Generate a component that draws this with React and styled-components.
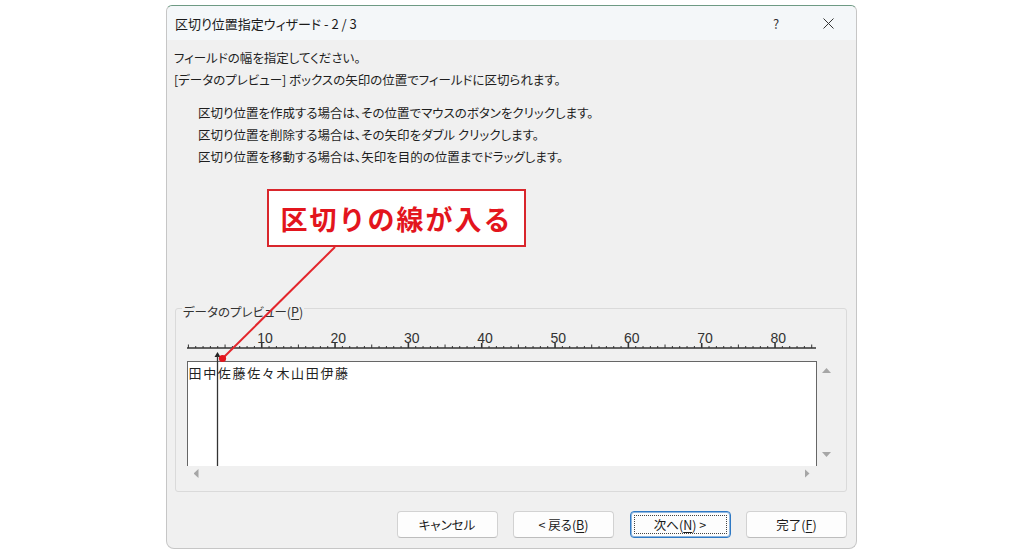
import React from 'react'
import styled, { createGlobalStyle } from 'styled-components'

const GlobalStyle = createGlobalStyle`
  html, body {
    margin: 0;
    padding: 0;
    background: #ffffff;
  }
  body {
    font-family: "Noto Sans CJK JP", "Noto Sans", sans-serif;
    color: #1e1e1e;
  }
`

const Page = styled.div`
  width: 1024px;
  height: 555px;
  box-sizing: border-box;
  padding: 5px 0 0 166px;
  display: flex;
  align-items: flex-start;
`

const Dialog = styled.div`
  position: relative;
  width: 691px;
  height: 544px;
  box-sizing: border-box;
  display: flex;
  flex-direction: column;
  background: #f0f0f0;
  border: 1px solid #c6c6c6;
  border-top-color: #6e9a84;
  border-radius: 6px 6px 8px 8px;
  font-size: 12.5px;
  font-feature-settings: "palt";
`

const TitleBar = styled.div`
  height: 34px;
  display: flex;
  align-items: center;
  padding-left: 8px;
  background: #f4f7f9;
  border-radius: 6px 6px 0 0;
`

const Title = styled.span`
  flex: 1;
  font-size: 13px;
  color: #1b1b1b;
`

const CaptionButton = styled.div`
  width: ${p => p.$w}px;
  height: 34px;
  display: flex;
  align-items: center;
  justify-content: center;
  font-size: 13px;
  color: #333;
`

const Body = styled.div`
  flex: 1;
  display: flex;
  flex-direction: column;
  padding: 7px 9px 0 7px;
`

const Lines = styled.div`
  line-height: 22px;
  padding-left: ${p => p.$indent || 0}px;
  margin-top: ${p => p.$gap || 0}px;
`

const Callout = styled.div`
  align-self: flex-start;
  margin: 21px 0 0 93px;
  width: 259px;
  height: 58px;
  box-sizing: border-box;
  display: flex;
  align-items: center;
  justify-content: center;
  background: #ffffff;
  border: 2.5px solid #d9262c;
  color: #e3151d;
  font-size: 27px;
  font-weight: 700;
  letter-spacing: 2px;
  font-feature-settings: normal;
`

const Group = styled.div`
  margin: 61px 0 0 1px;
  height: 184px;
  box-sizing: border-box;
  display: flex;
  flex-direction: column;
  padding: 0 10px 0 11px;
  border: 1px solid #dadada;
  border-radius: 3px;
`

const Legend = styled.div`
  align-self: flex-start;
  margin: -5px 0 0 -5px;
  padding: 0 1px;
  height: 15px;
  line-height: 15px;
  background: #f0f0f0;
  color: #333;
`

const Grid = styled.div`
  position: relative;
  margin-top: 11px;
`

const PreviewRow = styled.div`
  display: flex;
  margin-top: 10px;
`

const Pane = styled.div`
  width: 630px;
  height: 105px;
  box-sizing: border-box;
  background: #ffffff;
  border: 1.5px solid #666;
  border-bottom: none;
`

const PaneText = styled.div`
  font-size: 13px;
  line-height: 21px;
  letter-spacing: 1.66px;
  padding-left: 0.5px;
  color: #222;
  font-feature-settings: normal;
`

const VScroll = styled.div`
  width: 19px;
  height: 105px;
  box-sizing: border-box;
  display: flex;
  flex-direction: column;
  justify-content: space-between;
  align-items: center;
  padding: 7px 0 9px;
`

const HScroll = styled.div`
  width: 630px;
  height: 15px;
  box-sizing: border-box;
  display: flex;
  justify-content: space-between;
  align-items: center;
  padding: 0 7.5px 0 6.5px;
`

const Arrow = styled.div`
  width: ${p => (p.$dir === 'up' || p.$dir === 'down' ? 9 : 5)}px;
  height: ${p => (p.$dir === 'up' || p.$dir === 'down' ? 5 : 9)}px;
  background: #a6a6a6;
  clip-path: ${p =>
    ({
      up: 'polygon(50% 0, 100% 100%, 0 100%)',
      down: 'polygon(0 0, 100% 0, 50% 100%)',
      left: 'polygon(100% 0, 100% 100%, 0 50%)',
      right: 'polygon(0 0, 100% 50%, 0 100%)',
    })[p.$dir]};
`

const BreakMarker = styled.svg`
  position: absolute;
  left: 27px;
  top: 22px;
`

const Footer = styled.div`
  display: flex;
  justify-content: flex-end;
  gap: 15.5px;
  margin-top: 19px;
`

const Button = styled.div`
  position: relative;
  width: 101px;
  height: 27px;
  box-sizing: border-box;
  display: flex;
  align-items: center;
  justify-content: center;
  background: #fdfdfd;
  border: 1px solid ${p => (p.$focused ? '#2f79c4' : '#d2d2d2')};
  border-bottom-color: ${p => (p.$focused ? '#2f79c4' : '#bdbdbd')};
  box-shadow: ${p => (p.$focused ? 'inset 0 0 0 1px #8fb7e0' : 'none')};
  border-radius: 4px;
  color: #1b1b1b;

  &::after {
    content: '';
    display: ${p => (p.$focused ? 'block' : 'none')};
    position: absolute;
    inset: 3px;
    border: 1px dotted #444;
  }
`

const Key = styled.u`
  text-underline-offset: 2px;
`

const Annotation = styled.svg`
  position: absolute;
  left: 0;
  top: 0;
  pointer-events: none;
`

const COL0 = 1.4
const COL = 7.333

function Ruler() {
  const ticks = []
  for (let n = 0; n <= 85; n++) {
    const x = COL0 + n * COL
    const major = n % 10 === 0 && n > 0
    const mid = n % 5 === 0
    const h = major ? 5 : mid ? 3.5 : 2
    ticks.push(
      <line key={n} x1={x} x2={x} y1={18 - h} y2={18} stroke="#333" strokeWidth={major ? 1.6 : 1} />
    )
    if (major) {
      ticks.push(
        <text key={'t' + n} x={x - 4.5} y={13} fontSize="14" fill="#333" fontFamily="'Liberation Sans', sans-serif">
          {n}
        </text>
      )
    }
  }
  return (
    <svg width="630" height="21" style={{ display: 'block' }}>
      <line x1="0" x2="629" y1="18" y2="18" stroke="#333" strokeWidth="1.4" />
      {ticks}
    </svg>
  )
}

export default function App() {
  return (
    <>
      <GlobalStyle />
      <Page>
        <Dialog>
          <TitleBar>
            <Title>区切り位置指定ウィザード - 2 / 3</Title>
            <CaptionButton $w={48}>?</CaptionButton>
            <CaptionButton $w={56}>
              <svg width="11" height="11" viewBox="0 0 11 11">
                <path d="M0.5 0.5 L10.5 10.5 M10.5 0.5 L0.5 10.5" stroke="#333" strokeWidth="1" />
              </svg>
            </CaptionButton>
          </TitleBar>
          <Body>
            <Lines>
              <div>フィールドの幅を指定してください。</div>
              <div>[データのプレビュー] ボックスの矢印の位置でフィールドに区切られます。</div>
            </Lines>
            <Lines $indent={24} $gap={11}>
              <div>区切り位置を作成する場合は、その位置でマウスのボタンをクリックします。</div>
              <div>区切り位置を削除する場合は、その矢印をダブル クリックします。</div>
              <div>区切り位置を移動する場合は、矢印を目的の位置までドラッグします。</div>
            </Lines>
            <Callout>区切りの線が入る</Callout>
            <Group>
              <Legend>
                データのプレビュー(<Key>P</Key>)
              </Legend>
              <Grid>
                <Ruler />
                <PreviewRow>
                  <Pane>
                    <PaneText>田中佐藤佐々木山田伊藤</PaneText>
                  </Pane>
                  <VScroll>
                    <Arrow $dir="up" />
                    <Arrow $dir="down" />
                  </VScroll>
                </PreviewRow>
                <BreakMarker width="7" height="114">
                  <polygon points="3.5,0 0.5,5 6.5,5" fill="#222" />
                  <line x1="3.5" x2="3.5" y1="4" y2="114" stroke="#333" strokeWidth="1.3" />
                </BreakMarker>
              </Grid>
              <HScroll>
                <Arrow $dir="left" />
                <Arrow $dir="right" />
              </HScroll>
            </Group>
            <Footer>
              <Button>キャンセル</Button>
              <Button>
                &lt; 戻る(<Key>B</Key>)
              </Button>
              <Button $focused>
                次へ(<Key>N</Key>) &gt;
              </Button>
              <Button>
                完了(<Key>F</Key>)
              </Button>
            </Footer>
          </Body>
          <Annotation width="689" height="542">
            <line x1="168" y1="241" x2="55.5" y2="352.5" stroke="#e3262c" strokeWidth="2" />
            <circle cx="55.5" cy="352.5" r="3.6" fill="#e3151d" />
          </Annotation>
        </Dialog>
      </Page>
    </>
  )
}
